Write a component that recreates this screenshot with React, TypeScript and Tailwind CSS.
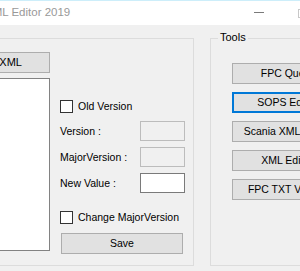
import React from 'react';

const font = { fontFamily: '"Liberation Sans", Arial, sans-serif' };

const Checkbox: React.FC<{ label: string }> = ({ label }) => (
  <div className="flex items-center h-[13px]">
    <div className="w-[13px] h-[13px] border border-[#333333] bg-white shrink-0" />
    <span className="ml-[5px] leading-none">{label}</span>
  </div>
);

const Field: React.FC<{ label: string; enabled?: boolean; className?: string }> = ({
  label,
  enabled,
  className = '',
}) => (
  <div className={`flex items-center h-[20px] ${className}`}>
    <span className="w-[80px] leading-none">{label}</span>
    <div
      className={`w-[45px] h-[20px] border ${
        enabled ? 'bg-white border-[#7a7a7a]' : 'bg-[#f0f0f0] border-[#bcbcbc]'
      }`}
    />
  </div>
);

const ToolButton: React.FC<{ label: string; focused?: boolean }> = ({ label, focused }) => (
  <div
    className={`w-[110px] h-[21px] shrink-0 flex items-center justify-center bg-[#e1e1e1] ${
      focused ? 'border-2 border-[#0078d7]' : 'border border-[#adadad]'
    }`}
  >
    <span className="whitespace-nowrap leading-none">{label}</span>
  </div>
);

export default function App() {
  return (
    <div
      className="w-[300px] h-[271px] overflow-hidden bg-[#f0f0f0] text-[10.5px] text-black flex flex-col"
      style={font}
    >
      {/* Title bar */}
      <div className="h-[25px] shrink-0 bg-white border-t border-[#cdeefa] flex items-center relative">
        <span className="ml-[-15px] text-[11.5px] text-[#999999] whitespace-nowrap leading-none">
          XML Editor 2019
        </span>
        <div className="absolute left-[254px] top-[11px] w-[10px] h-px bg-[#7a7a7a]" />
        <div className="absolute left-[298px] top-[8px] w-[10px] h-[9px] border border-[#c8c8c8]" />
      </div>

      {/* Body */}
      <div className="flex mt-[13px]">
        {/* Left group */}
        <div className="ml-[-12px] w-[206px] h-[228px] shrink-0 border border-[#dcdcdc] flex">
          <div className="w-[61px] shrink-0 flex flex-col pt-[13px]">
            <div className="h-[21px] bg-[#e1e1e1] border border-[#adadad] flex items-center justify-end pr-[27px] text-[11px] overflow-hidden">
              <span className="leading-none whitespace-nowrap">Load XML</span>
            </div>
            <div className="mt-[5px] h-[173px] bg-white border border-[#828282]" />
          </div>
          <div className="ml-[10px] flex flex-col pt-[61px]">
            <Checkbox label="Old Version" />
            <Field label="Version :" className="mt-[8px]" />
            <Field label="MajorVersion :" className="mt-[6px]" />
            <Field label="New Value :" enabled className="mt-[6px]" />
            <div className="mt-[18px]">
              <Checkbox label="Change MajorVersion" />
            </div>
            <div className="mt-[9px] ml-px w-[122px] h-[21px] bg-[#e1e1e1] border border-[#adadad] flex items-center justify-center">
              <span className="leading-none">Save</span>
            </div>
          </div>
        </div>

        {/* Tools group */}
        <div className="ml-[16px] w-[120px] h-[228px] shrink-0 border border-[#dcdcdc] relative flex flex-col pl-[21px] pt-[24px] gap-[8px]">
          <span className="absolute left-[7px] top-[-7px] px-[2px] bg-[#f0f0f0] text-[11px] leading-none">
            Tools
          </span>
          <ToolButton label="FPC Query" />
          <ToolButton label="SOPS Editor" focused />
          <ToolButton label="Scania XML Editor" />
          <ToolButton label="XML Editor" />
          <ToolButton label="FPC TXT Viewer" />
        </div>
      </div>
    </div>
  );
}
